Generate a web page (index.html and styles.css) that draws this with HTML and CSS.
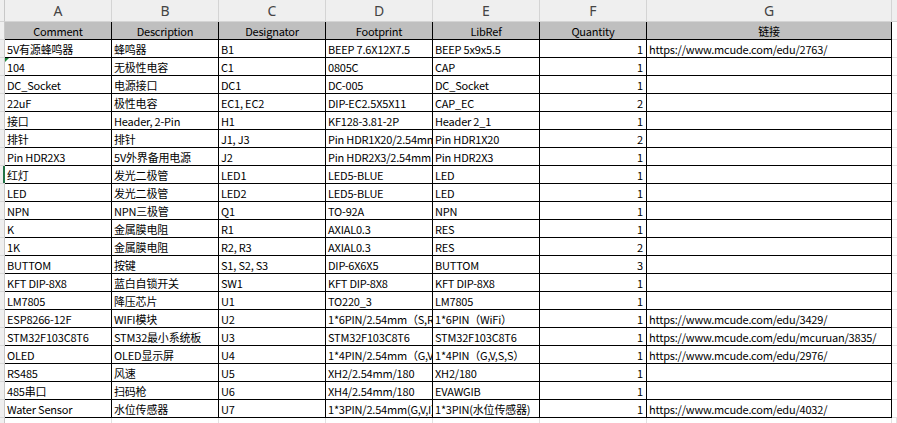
FILE: index.html
```html
<!DOCTYPE html>
<html lang="zh">
<head>
<meta charset="utf-8">
<title>BOM</title>
<link rel="stylesheet" href="styles.css">
</head>
<body>
<div class="sheet">
  <div class="row letters">
    <div class="rh"></div>
    <div class="c">A</div><div class="c">B</div><div class="c">C</div><div class="c">D</div><div class="c">E</div><div class="c">F</div><div class="c">G</div><div class="c x"></div>
  </div>
  <div class="row head">
    <div class="rh"></div>
    <div class="c">Comment</div><div class="c">Description</div><div class="c">Designator</div><div class="c">Footprint</div><div class="c">LibRef</div><div class="c">Quantity</div><div class="c">链接</div><div class="c x"></div>
  </div>
  <div class="row"><div class="rh"></div><div class="c">5V有源蜂鸣器</div><div class="c">蜂鸣器</div><div class="c">B1</div><div class="c">BEEP 7.6X12X7.5</div><div class="c">BEEP 5x9x5.5</div><div class="c n">1</div><div class="c">https://www.mcude.com/edu/2763/</div><div class="c x"></div></div>
  <div class="row"><div class="rh"></div><div class="c note">104</div><div class="c">无极性电容</div><div class="c">C1</div><div class="c">0805C</div><div class="c">CAP</div><div class="c n">1</div><div class="c"></div><div class="c x"></div></div>
  <div class="row"><div class="rh"></div><div class="c">DC_Socket</div><div class="c">电源接口</div><div class="c">DC1</div><div class="c">DC-005</div><div class="c">DC_Socket</div><div class="c n">1</div><div class="c"></div><div class="c x"></div></div>
  <div class="row"><div class="rh"></div><div class="c">22uF</div><div class="c">极性电容</div><div class="c">EC1, EC2</div><div class="c">DIP-EC2.5X5X11</div><div class="c">CAP_EC</div><div class="c n">2</div><div class="c"></div><div class="c x"></div></div>
  <div class="row"><div class="rh"></div><div class="c">接口</div><div class="c">Header, 2-Pin</div><div class="c">H1</div><div class="c">KF128-3.81-2P</div><div class="c">Header 2_1</div><div class="c n">1</div><div class="c"></div><div class="c x"></div></div>
  <div class="row"><div class="rh"></div><div class="c">排针</div><div class="c">排针</div><div class="c">J1, J3</div><div class="c">Pin HDR1X20/2.54mm</div><div class="c">Pin HDR1X20</div><div class="c n">2</div><div class="c"></div><div class="c x"></div></div>
  <div class="row"><div class="rh"></div><div class="c">Pin HDR2X3</div><div class="c">5V外界备用电源</div><div class="c">J2</div><div class="c">Pin HDR2X3/2.54mm</div><div class="c">Pin HDR2X3</div><div class="c n">1</div><div class="c"></div><div class="c x"></div></div>
  <div class="row"><div class="rh sel"></div><div class="c">红灯</div><div class="c">发光二极管</div><div class="c">LED1</div><div class="c">LED5-BLUE</div><div class="c">LED</div><div class="c n">1</div><div class="c"></div><div class="c x"></div></div>
  <div class="row"><div class="rh"></div><div class="c">LED</div><div class="c">发光二极管</div><div class="c">LED2</div><div class="c">LED5-BLUE</div><div class="c">LED</div><div class="c n">1</div><div class="c"></div><div class="c x"></div></div>
  <div class="row"><div class="rh"></div><div class="c">NPN</div><div class="c">NPN三极管</div><div class="c">Q1</div><div class="c">TO-92A</div><div class="c">NPN</div><div class="c n">1</div><div class="c"></div><div class="c x"></div></div>
  <div class="row"><div class="rh"></div><div class="c">K</div><div class="c">金属膜电阻</div><div class="c">R1</div><div class="c">AXIAL0.3</div><div class="c">RES</div><div class="c n">1</div><div class="c"></div><div class="c x"></div></div>
  <div class="row"><div class="rh"></div><div class="c">1K</div><div class="c">金属膜电阻</div><div class="c">R2, R3</div><div class="c">AXIAL0.3</div><div class="c">RES</div><div class="c n">2</div><div class="c"></div><div class="c x"></div></div>
  <div class="row"><div class="rh"></div><div class="c">BUTTOM</div><div class="c">按键</div><div class="c">S1, S2, S3</div><div class="c">DIP-6X6X5</div><div class="c">BUTTOM</div><div class="c n">3</div><div class="c"></div><div class="c x"></div></div>
  <div class="row"><div class="rh"></div><div class="c">KFT DIP-8X8</div><div class="c">蓝白自锁开关</div><div class="c">SW1</div><div class="c">KFT DIP-8X8</div><div class="c">KFT DIP-8X8</div><div class="c n">1</div><div class="c"></div><div class="c x"></div></div>
  <div class="row"><div class="rh"></div><div class="c">LM7805</div><div class="c">降压芯片</div><div class="c">U1</div><div class="c">TO220_3</div><div class="c">LM7805</div><div class="c n">1</div><div class="c"></div><div class="c x"></div></div>
  <div class="row"><div class="rh"></div><div class="c">ESP8266-12F</div><div class="c">WIFI模块</div><div class="c">U2</div><div class="c">1*6PIN/2.54mm（S,R,G,V）</div><div class="c">1*6PIN（WiFi）</div><div class="c n">1</div><div class="c">https://www.mcude.com/edu/3429/</div><div class="c x"></div></div>
  <div class="row"><div class="rh"></div><div class="c">STM32F103C8T6</div><div class="c">STM32最小系统板</div><div class="c">U3</div><div class="c">STM32F103C8T6</div><div class="c">STM32F103C8T6</div><div class="c n">1</div><div class="c">https://www.mcude.com/edu/mcuruan/3835/</div><div class="c x"></div></div>
  <div class="row"><div class="rh"></div><div class="c">OLED</div><div class="c">OLED显示屏</div><div class="c">U4</div><div class="c">1*4PIN/2.54mm（G,V,S,S）</div><div class="c">1*4PIN（G,V,S,S）</div><div class="c n">1</div><div class="c">https://www.mcude.com/edu/2976/</div><div class="c x"></div></div>
  <div class="row"><div class="rh"></div><div class="c">RS485</div><div class="c">风速</div><div class="c">U5</div><div class="c">XH2/2.54mm/180</div><div class="c">XH2/180</div><div class="c n">1</div><div class="c"></div><div class="c x"></div></div>
  <div class="row"><div class="rh"></div><div class="c">485串口</div><div class="c">扫码枪</div><div class="c">U6</div><div class="c">XH4/2.54mm/180</div><div class="c">EVAWGIB</div><div class="c n">1</div><div class="c"></div><div class="c x"></div></div>
  <div class="row"><div class="rh"></div><div class="c">Water Sensor</div><div class="c">水位传感器</div><div class="c">U7</div><div class="c">1*3PIN/2.54mm(G,V,I)</div><div class="c">1*3PIN(水位传感器)</div><div class="c n">1</div><div class="c">https://www.mcude.com/edu/4032/</div><div class="c x"></div></div>
  <div class="row blank"><div class="rh"></div><div class="c"></div><div class="c"></div><div class="c"></div><div class="c"></div><div class="c"></div><div class="c"></div><div class="c"></div><div class="c x"></div></div>
</div>
</body>
</html>
```
FILE: styles.css
```css
html, body {
  margin: 0;
  padding: 0;
  background: #ffffff;
}
body {
  width: 897px;
  height: 423px;
  overflow: hidden;
  font-family: "Noto Sans CJK SC", "Noto Sans", sans-serif;
  font-size: 11px;
  letter-spacing: -0.2px;
  color: #000;
}
.sheet {
  display: flex;
  flex-direction: column;
}
.row {
  display: grid;
  grid-template-columns: 5px repeat(6, 107px) 245px 1fr;
  height: 18px;
}
.rh {
  background: #efefef;
  border-right: 1px solid #c8c8c8;
  border-bottom: 1px solid #d8d8d8;
  box-sizing: border-box;
  position: relative;
}
.rh.sel::after {
  content: "";
  position: absolute;
  right: -1px;
  top: 0;
  bottom: 0;
  width: 2px;
  background: #217346;
}
.c {
  box-sizing: border-box;
  border-right: 1px solid #000;
  border-bottom: 1px solid #000;
  padding: 0 2px;
  line-height: 18px;
  white-space: nowrap;
  overflow: hidden;
  position: relative;
}
.c.n {
  text-align: right;
  padding-right: 3px;
}
.c.x {
  border-right: none;
  border-bottom: 1px solid #e1e1e1;
}
.c.note::before {
  content: "";
  position: absolute;
  left: 0;
  top: 0;
  border-top: 4px solid #1e8a3c;
  border-right: 4px solid transparent;
}
.letters {
  height: 22px;
}
.letters .c {
  background: #efefef;
  border-right: 1px solid #d4d4d4;
  border-bottom: 1px solid #d4d4d4;
  text-align: center;
  line-height: 21px;
  font-size: 14px;
  letter-spacing: 0;
  color: #444;
  font-family: "Noto Sans", sans-serif;
}
.letters .rh {
  border-bottom: 1px solid #d4d4d4;
}
.letters .c.x {
  border-right: none;
}
.head .c {
  background: #bfbfbf;
  text-align: center;
}
.head .c.x {
  background: #fff;
}
.blank .c {
  border-right: 1px solid #e1e1e1;
  border-bottom: none;
}
.blank .rh {
  border-bottom: none;
}
```
